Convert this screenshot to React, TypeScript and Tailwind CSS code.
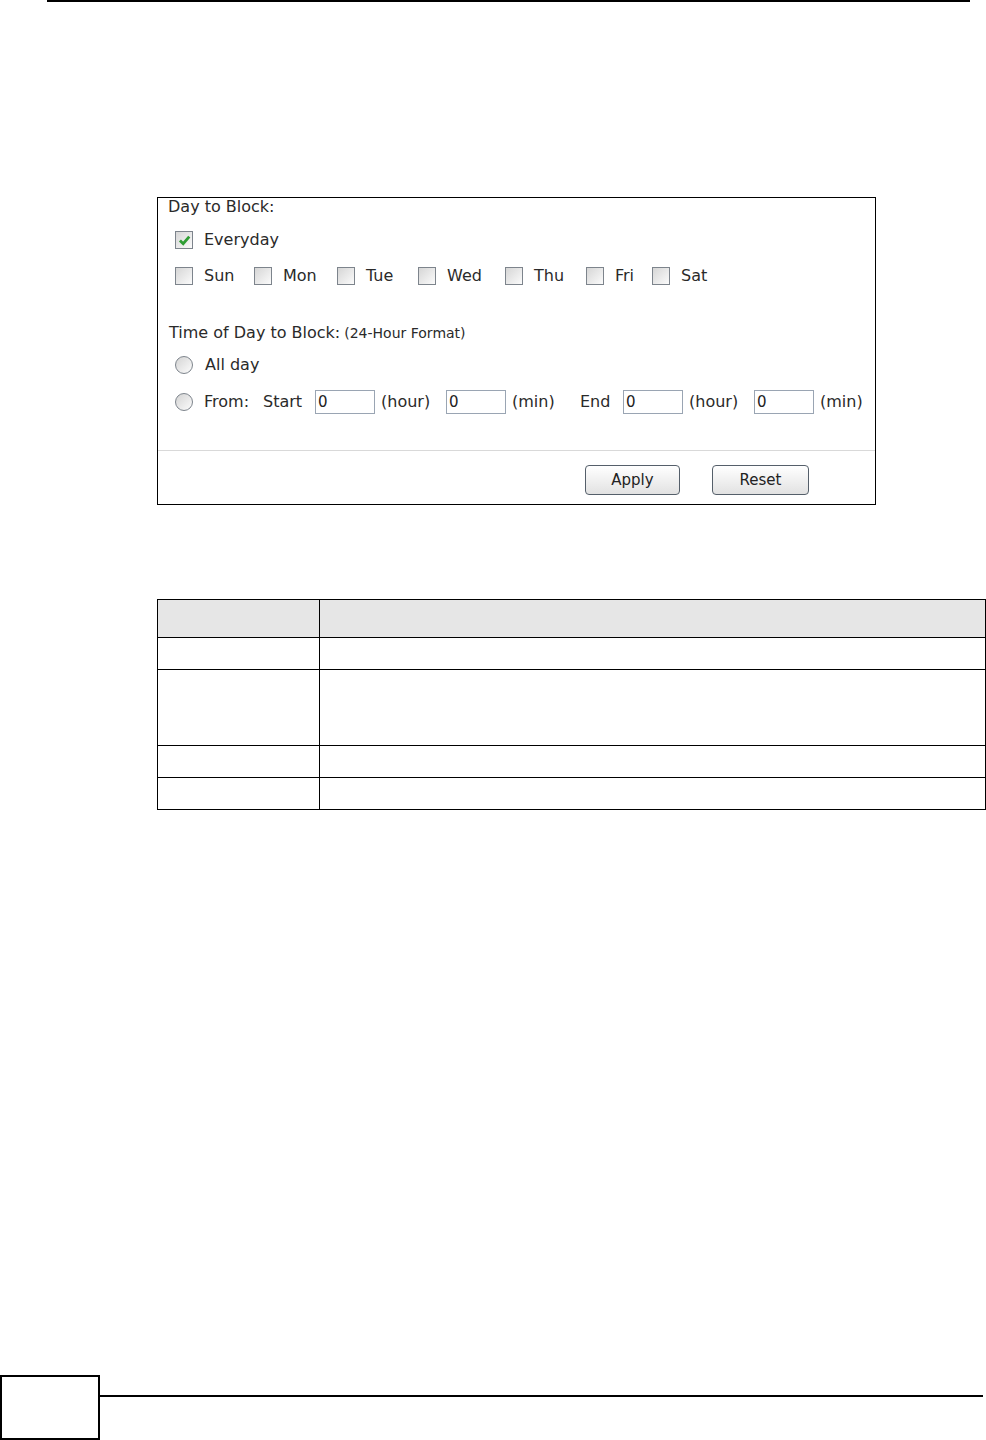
import React from "react";

const font = { fontFamily: "Tahoma, 'DejaVu Sans', 'Noto Sans', sans-serif" };

function Checkbox({ checked = false }: { checked?: boolean }) {
  return (
    <span className="flex h-[18px] w-[18px] shrink-0 items-center justify-center border border-[#7d848c] bg-gradient-to-br from-[#d6d6d6] to-[#fbfbfb]">
      {checked && (
        <svg width="13" height="13" viewBox="0 0 12 12">
          <path d="M1.8 6 L4.8 9 L10.4 2.4" fill="none" stroke="#2f9e34" strokeWidth="2.6" />
        </svg>
      )}
    </span>
  );
}

function Radio() {
  return (
    <span className="block h-[18px] w-[18px] shrink-0 rounded-full border border-[#7d848c] bg-gradient-to-br from-[#d4d4d4] to-[#fcfcfc]" />
  );
}

function TextInput() {
  return (
    <span className="flex h-[24px] w-[60px] shrink-0 items-center border border-[#9aa5b3] bg-white pl-[2px] text-[15px] leading-none text-[#222]">
      0
    </span>
  );
}

function Button({ label, w }: { label: string; w: string }) {
  return (
    <span
      className={`flex h-[30px] ${w} items-center justify-center rounded-[4px] border border-[#555f6a] bg-gradient-to-b from-[#ffffff] to-[#e2e2e2] text-[15px] text-[#222]`}
    >
      {label}
    </span>
  );
}

const days = [
  { d: "Sun", w: "w-[79px]" },
  { d: "Mon", w: "w-[83px]" },
  { d: "Tue", w: "w-[81px]" },
  { d: "Wed", w: "w-[87px]" },
  { d: "Thu", w: "w-[81px]" },
  { d: "Fri", w: "w-[66px]" },
  { d: "Sat", w: "w-[60px]" },
];

const rows = ["h-[38px] bg-[#e6e6e6]", "h-[32px]", "h-[76px]", "h-[32px]", "h-[32px]"];

export default function App() {
  return (
    <div className="flex h-[1440px] w-[986px] flex-col bg-white" style={font}>
      <div className="ml-[47px] h-[2px] w-[923px] bg-black" />

      <div className="ml-[157px] mt-[195px] flex h-[308px] w-[719px] flex-col border border-black text-[16px] text-[#2a2a2a]">
        <div className="flex h-[18px] items-center pl-[10px]">Day to Block:</div>

        <div className="mt-[12px] flex h-[24px] items-center pl-[17px]">
          <Checkbox checked />
          <span className="ml-[11px]">Everyday</span>
        </div>

        <div className="mt-[12px] flex h-[24px] items-center pl-[17px]">
          {days.map((x) => (
            <div key={x.d} className={`flex ${x.w} shrink-0 items-center`}>
              <Checkbox />
              <span className="ml-[11px]">{x.d}</span>
            </div>
          ))}
        </div>

        <div className="mt-[33px] flex h-[24px] items-center pl-[11px]">
          <span>Time of Day to Block:</span>
          <span className="ml-[4px] text-[14px]">(24-Hour Format)</span>
        </div>

        <div className="mt-[8px] flex h-[24px] items-center pl-[17px]">
          <Radio />
          <span className="ml-[12px]">All day</span>
        </div>

        <div className="mt-[13px] flex h-[24px] items-center pl-[17px]">
          <Radio />
          <span className="ml-[11px] w-[59px] shrink-0">From:</span>
          <span className="w-[52px] shrink-0">Start</span>
          <TextInput />
          <span className="ml-[6px] w-[65px] shrink-0">(hour)</span>
          <TextInput />
          <span className="ml-[6px] w-[68px] shrink-0">(min)</span>
          <span className="w-[43px] shrink-0">End</span>
          <TextInput />
          <span className="ml-[6px] w-[65px] shrink-0">(hour)</span>
          <TextInput />
          <span className="ml-[6px] shrink-0">(min)</span>
        </div>

        <div className="mt-[36px] h-px w-full bg-[#d9d9d9]" />

        <div className="mt-[14px] flex h-[30px] items-center pl-[427px]">
          <Button label="Apply" w="w-[95px]" />
          <div className="ml-[32px]">
            <Button label="Reset" w="w-[97px]" />
          </div>
        </div>
      </div>

      <div className="ml-[157px] mt-[94px] flex w-[829px] flex-col border-l border-t border-black">
        {rows.map((r, i) => (
          <div key={i} className={`flex ${r}`}>
            <div className="w-[162px] shrink-0 border-b border-r border-black" />
            <div className="flex-1 border-b border-r border-black" />
          </div>
        ))}
      </div>

      <div className="mt-auto flex items-start">
        <div className="h-[65px] w-[100px] shrink-0 border-2 border-black" />
        <div className="mr-[3px] mt-[20px] h-[1.5px] flex-1 bg-black" />
      </div>
    </div>
  );
}
